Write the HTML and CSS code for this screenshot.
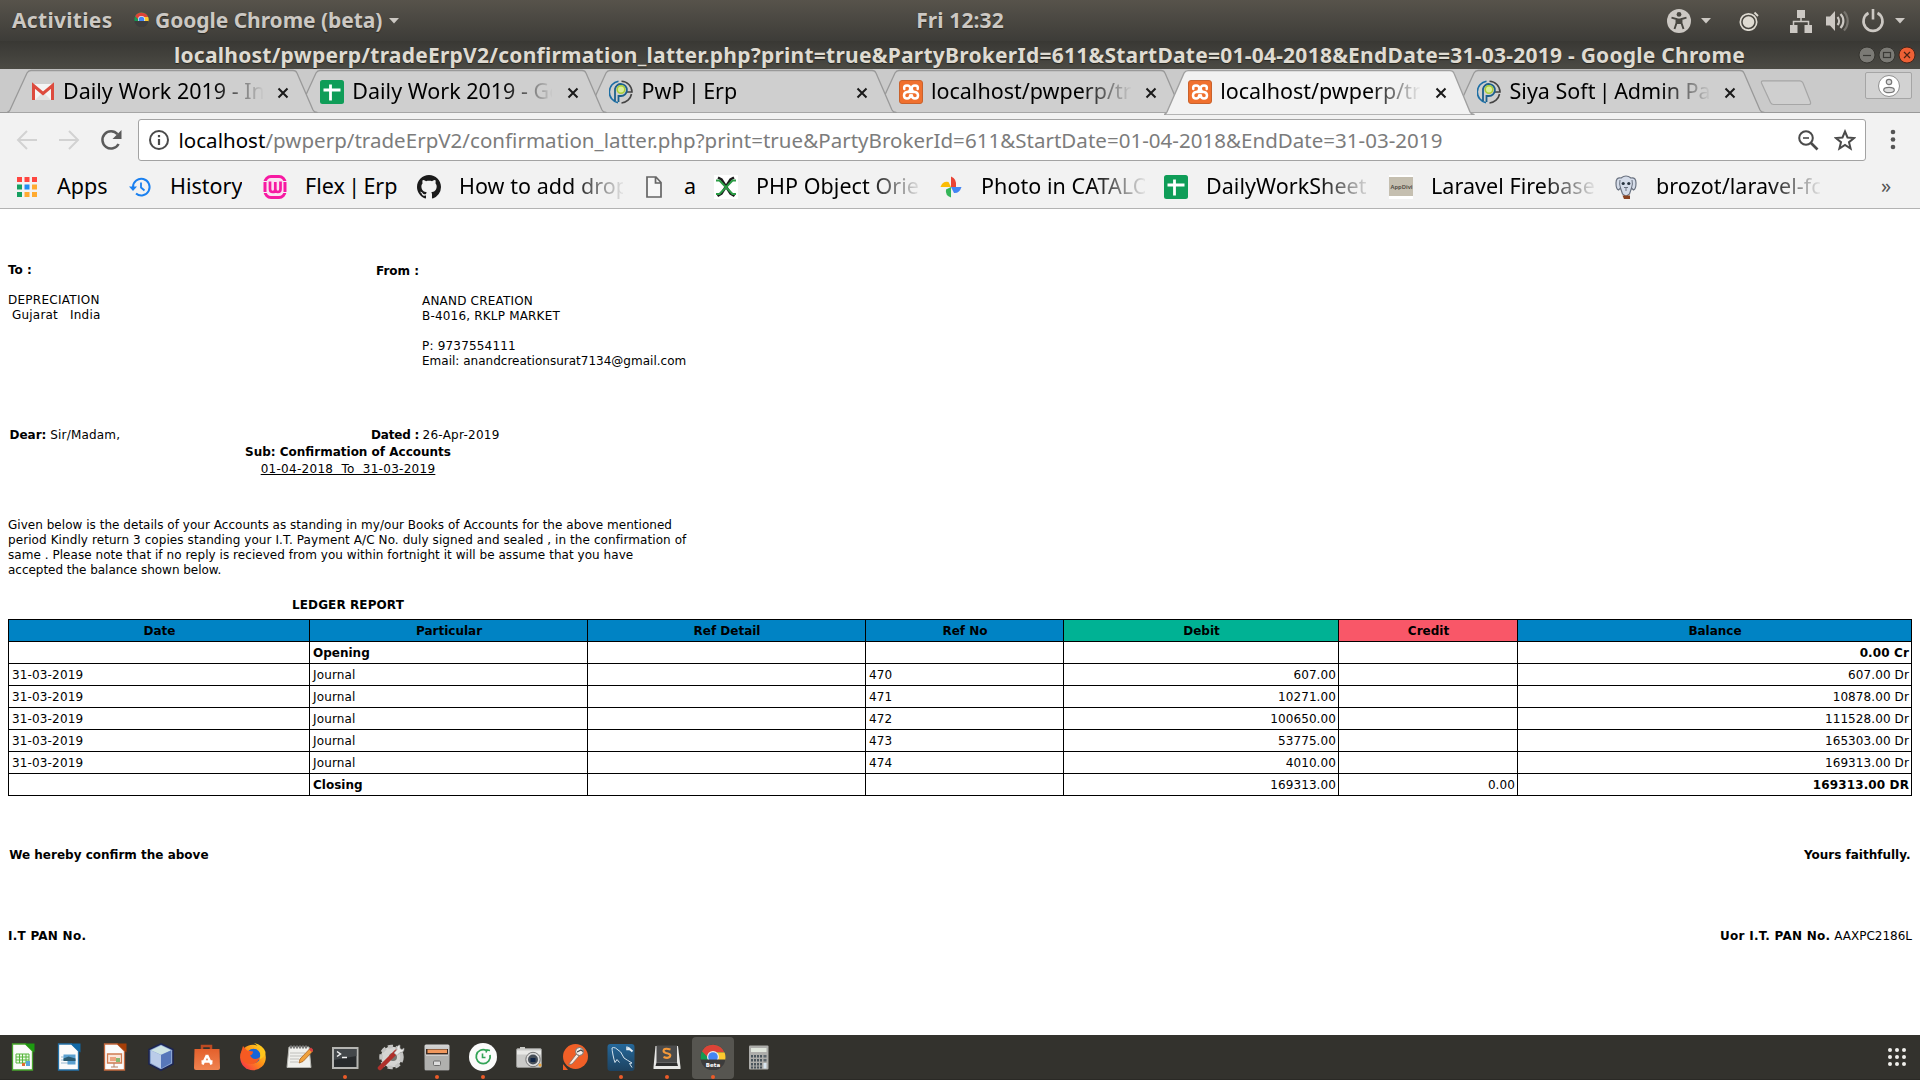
FILE: index.html
```
<!DOCTYPE html>
<html lang="en">
<head>
<meta charset="utf-8">
<title>Confirmation of Accounts</title>
<link rel="stylesheet" href="styles.css">
</head>
<body>
<svg class="defs" aria-hidden="true">
  <defs>
    <linearGradient id="metal" x1="0" y1="0" x2="0" y2="1"><stop offset="0" stop-color="#d6d6d6"/><stop offset="1" stop-color="#929292"/></linearGradient>
    <linearGradient id="cal" x1="0" y1="0" x2="0" y2="1"><stop offset="0" stop-color="#25689a"/><stop offset="1" stop-color="#1d4260"/></linearGradient>
    <linearGradient id="bag" x1="0" y1="0" x2="0" y2="1"><stop offset="0" stop-color="#e4602c"/><stop offset="1" stop-color="#ef8350"/></linearGradient>
    <linearGradient id="fox" x1="1" y1="0" x2="0" y2="1"><stop offset="0" stop-color="#ffe226"/><stop offset=".45" stop-color="#ff9416"/><stop offset="1" stop-color="#f5204f"/></linearGradient>
    <symbol id="tab" viewBox="0 0 311 44" preserveAspectRatio="none"><path d="M0 43.5Q2 43 3 41L20 4Q21.500 1.500 24 1.500H286Q289 1.500 290 4L306 41Q307 43 310 43.500V44H0z"/></symbol>
    <symbol id="sheets" viewBox="0 0 24 24"><rect width="24" height="24" rx="2.500" fill="#0f9d58"/><path d="M10.500 4.500v16M3.500 10h17" stroke="#fff" stroke-width="2.800"/></symbol>
    <symbol id="xampp" viewBox="0 0 24 24"><rect x=".5" y=".5" width="23" height="23" rx="2.500" fill="#f0702e" stroke="#c9622c"/><path d="M5.300 9Q4.500 5.500 8 5.500t3.200 3.200Q11.200 12 8 12q-3 .5-3 3.500t3 3q3.200 0 3.200-3.200M18.700 9q.8-3.500-2.700-3.500t-3.200 3.200Q12.800 12 16 12q3 .5 3 3.500t-3 3q-3.200 0-3.200-3.200M8 12h8" fill="none" stroke="#fff" stroke-width="2.500" stroke-linecap="round"/></symbol>
    <symbol id="pwp" viewBox="0 0 24 24"><path d="M9 22.800A11 11 0 0 1 9.500 1.200" fill="none" stroke="#1c6ea4" stroke-width="1.600"/><path d="M12.500 1.200A11 11 0 0 1 23 12H18M22.500 14A11 11 0 0 1 12.500 23" fill="none" stroke="#444" stroke-width="1.600"/><path d="M6 21V9a6 6 0 1 1 6 7H9.500v6" fill="none" stroke="#1d608c" stroke-width="1.800"/><circle cx="12" cy="9.500" r="3.800" fill="#d8ee9a" stroke="#a9cd3a" stroke-width="1.600"/></symbol>
    <symbol id="chrome" viewBox="0 0 26 26"><circle cx="13" cy="13" r="12.500" fill="#454545"/><path d="M2 7.200A12.500 12.500 0 0 1 24 7.200L24.600 9H13L8 16.500H1.300A12.500 12.500 0 0 1 2 7.200z" fill="#159a52"/><path d="M2 7.200A12.500 12.500 0 0 1 24.500 8.500H13L7.500 13z" fill="#dd4337"/><path d="M17 8.500h7.600a12.500 12.500 0 0 1 .4 8H17z" fill="#fdc92f"/><circle cx="13" cy="13" r="6" fill="#eee"/><circle cx="13" cy="13" r="4.800" fill="#4285f4"/><path d="M.6 15.500h24.800A12.500 12.500 0 0 1 .6 15.500z" fill="#3c3c3c"/></symbol>
    <symbol id="caret" viewBox="0 0 10 6"><path d="M0 0h10L5 5.500z" fill="#ccc8c3"/></symbol>
  </defs>
</svg>

<header class="topbar">
  <div class="topbar-left">
    <span class="activities">Activities</span>
    <svg class="app-icon"><use href="#chrome"/></svg>
    <span class="app-name">Google Chrome (beta)</span>
    <svg class="caret"><use href="#caret"/></svg>
  </div>
  <div class="clock">Fri 12:32</div>
  <div class="tray">
    <svg class="ico24" viewBox="0 0 24 24"><circle cx="12" cy="12" r="12" fill="#ccc8c3"/><circle cx="12" cy="5.400" r="2.400" fill="#484640"/><path d="M4.500 8.700l5 1.300v4l-2 6M19.500 8.700l-5 1.300v4l2 6" fill="none" stroke="#484640" stroke-width="1.900"/><path d="M9 9.500h6v5.500H9z" fill="#484640"/></svg>
    <svg class="caret tray-caret"><use href="#caret"/></svg>
    <svg class="ico20 cam" viewBox="0 0 20 20"><circle cx="9.500" cy="11" r="8.200" fill="none" stroke="#dfdbd2" stroke-width="1.700"/><circle cx="9.500" cy="11" r="5.800" fill="#dfdbd2"/><path d="M15.500 1.500l3.500 3.500" stroke="#dfdbd2" stroke-width="1.800"/></svg>
    <svg class="ico24 net" viewBox="0 0 24 24"><path d="M8 1h8v8H8zM1 16h7.500v8H1zM15.500 16H23v8h-7.500z" fill="#ccc8c3"/><path d="M12 8v4.500M4.500 17v-4.500h15V17" fill="none" stroke="#ccc8c3" stroke-width="1.500"/></svg>
    <svg class="ico24 vol" viewBox="0 0 24 24"><path d="M1 7.500h4l5-5.500v20l-5-5.500H1z" fill="#ccc8c3"/><path d="M12.500 8a6 6 0 0 1 0 8M15.500 5a10 10 0 0 1 0 14" fill="none" stroke="#ccc8c3" stroke-width="2.200"/><path d="M19 2.500a14 14 0 0 1 0 19" fill="none" stroke="#77746e" stroke-width="2.200"/></svg>
    <svg class="ico24 pow" viewBox="0 0 24 24"><path d="M7.500 4a9.500 9.500 0 1 0 9 0M12 0v10.500" fill="none" stroke="#ccc8c3" stroke-width="2.600"/></svg>
    <svg class="caret tray-caret"><use href="#caret"/></svg>
  </div>
</header>

<div class="titlebar">
  <div class="win-title">localhost/pwperp/tradeErpV2/confirmation_latter.php?print=true&amp;PartyBrokerId=611&amp;StartDate=01-04-2018&amp;EndDate=31-03-2019 - Google Chrome</div>
  <div class="win-buttons">
    <svg class="wb" viewBox="0 0 18 18"><circle cx="9" cy="9" r="8" fill="#7b7a75" stroke="#35342f"/><path d="M5 9.500h8" stroke="#3a3935" stroke-width="1.200"/></svg>
    <svg class="wb" viewBox="0 0 18 18"><circle cx="9" cy="9" r="8" fill="#7b7a75" stroke="#35342f"/><rect x="5.500" y="6.500" width="7" height="5" fill="none" stroke="#3a3935" stroke-width="1.200"/></svg>
    <svg class="wb" viewBox="0 0 18 18"><circle cx="9" cy="9" r="8" fill="#ee6035" stroke="#45251a"/><path d="M6 6l6 6M12 6l-6 6" stroke="#4b2314" stroke-width="1.200"/></svg>
  </div>
</div>

<nav class="tabstrip">
  <div class="tab t1"><svg class="tab-bg"><use href="#tab"/></svg>
    <svg class="fav" viewBox="0 0 24 24"><path d="M2 4h20v16H2z" fill="#f4f4f4"/><path d="M4 20l8-8 8 8" fill="#e2e2e2"/><path d="M2.500 20V5.500L12 13.500l9.500-8V20" fill="none" stroke="#dd4b3e" stroke-width="3"/></svg>
    <span class="tab-title">Daily Work 2019 - Inbox</span><svg class="x" viewBox="0 0 12 12"><path d="M1.500 1.500l9 9M10.500 1.500l-9 9"/></svg></div>
  <div class="tab t2"><svg class="tab-bg"><use href="#tab"/></svg><svg class="fav"><use href="#sheets"/></svg><span class="tab-title">Daily Work 2019 - Goo</span><svg class="x" viewBox="0 0 12 12"><path d="M1.500 1.500l9 9M10.500 1.500l-9 9"/></svg></div>
  <div class="tab t3"><svg class="tab-bg"><use href="#tab"/></svg><svg class="fav"><use href="#pwp"/></svg><span class="tab-title bar">PwP | Erp</span><svg class="x" viewBox="0 0 12 12"><path d="M1.500 1.500l9 9M10.500 1.500l-9 9"/></svg></div>
  <div class="tab t4"><svg class="tab-bg"><use href="#tab"/></svg><svg class="fav"><use href="#xampp"/></svg><span class="tab-title">localhost/pwperp/trad</span><svg class="x" viewBox="0 0 12 12"><path d="M1.500 1.500l9 9M10.500 1.500l-9 9"/></svg></div>
  <div class="tab t5 active"><svg class="tab-bg"><use href="#tab"/></svg><svg class="fav"><use href="#xampp"/></svg><span class="tab-title">localhost/pwperp/trad</span><svg class="x" viewBox="0 0 12 12"><path d="M1.500 1.500l9 9M10.500 1.500l-9 9"/></svg></div>
  <div class="tab t6"><svg class="tab-bg"><use href="#tab"/></svg><svg class="fav"><use href="#pwp"/></svg><span class="tab-title">Siya Soft<span class="bar"> | </span>Admin Panel</span><svg class="x" viewBox="0 0 12 12"><path d="M1.500 1.500l9 9M10.500 1.500l-9 9"/></svg></div>
  <svg class="newtab" viewBox="0 0 52 26"><path d="M3 .8H40Q42 .8 43 3L50.500 22Q51 24.500 49 24.500H13.500Q11.500 24.500 10.500 22.500L1.500 3Q1 .8 3 .8z" fill="#cfcfcf" stroke="#a6a6a6" stroke-width="1.200"/></svg>
  <div class="profile"><svg class="avatar" viewBox="0 0 22 22"><circle cx="11" cy="11" r="10.500" fill="#fff" stroke="#8f8f8f"/><circle cx="11" cy="7" r="2.700" fill="#ddd" stroke="#777" stroke-width="1.200"/><ellipse cx="11" cy="15" rx="5.300" ry="2.700" fill="#ddd" stroke="#777" stroke-width="1.200"/></svg></div>
</nav>

<div class="toolbar">
  <svg class="nav-ico" viewBox="0 0 22 22"><path d="M21 11H2.500M11 2L2 11l9 9" fill="none" stroke="#d2d2d2" stroke-width="2"/></svg>
  <svg class="nav-ico" viewBox="0 0 22 22"><path d="M1 11h18.500M11 2l9 9-9 9" fill="none" stroke="#d2d2d2" stroke-width="2"/></svg>
  <svg class="nav-ico" viewBox="0 0 22 22"><path d="M18.600 15A8.600 8.600 0 1 1 17.500 5.200" fill="none" stroke="#5a5a5a" stroke-width="2.500"/><path d="M21.500 1v9h-9z" fill="#5a5a5a"/></svg>
  <div class="omnibox">
    <svg class="info" viewBox="0 0 22 22"><circle cx="11" cy="11" r="9" fill="none" stroke="#4a4a4a" stroke-width="2"/><path d="M11 10v6M11 6v2.200" stroke="#4a4a4a" stroke-width="2.200"/></svg>
    <div class="url"><span class="host">localhost</span>/pwperp/tradeErpV2/confirmation_latter.php?print=true&amp;PartyBrokerId=611&amp;StartDate=01-04-2018&amp;EndDate=31-03-2019</div>
    <svg class="nav-ico zoomout" viewBox="0 0 22 22"><circle cx="9" cy="9" r="6.800" fill="none" stroke="#4a4a4a" stroke-width="2"/><path d="M14 14l6.500 6.500" stroke="#4a4a4a" stroke-width="2.600"/><path d="M6 9h6" stroke="#4a4a4a" stroke-width="1.600"/></svg>
    <svg class="nav-ico star" viewBox="0 0 22 22"><path d="M11 2.500l2.500 6 6.500.500-5 4.200 1.600 6.300L11 16l-5.600 3.500L7 13.200 2 9l6.500-.5z" fill="none" stroke="#4a4a4a" stroke-width="2"/></svg>
  </div>
  <svg class="menu" viewBox="0 0 6 22"><circle cx="3" cy="3" r="2.300"/><circle cx="3" cy="10.500" r="2.300"/><circle cx="3" cy="18" r="2.300"/></svg>
</div>

<div class="bookmarks">
  <div class="bm apps"><svg class="bi" viewBox="0 0 24 24"><path d="M2 2h5v5H2zM9.500 2h5v5h-5zM17 2h5v5h-5z" fill="#ff4640"/><path d="M2 9.500h5v5H2zM2 17h5v5H2z" fill="#16a061"/><path d="M9.500 9.500h5v5h-5z" fill="#1e8df0"/><path d="M17 9.500h5v5h-5zM9.500 17h5v5h-5zM17 17h5v5h-5z" fill="#ffaa30"/></svg><span>Apps</span></div>
  <div class="bm hist"><svg class="bi" viewBox="0 0 24 24"><path d="M5 12a8.300 8.300 0 1 1 3 6.500" fill="none" stroke="#1a80f0" stroke-width="2"/><path d="M1 11.500h8L5 16z" fill="#1a80f0"/><path d="M13 7.500v5l3.500 3" fill="none" stroke="#1a80f0" stroke-width="1.800"/></svg><span>History</span></div>
  <div class="bm flex"><svg class="bi" viewBox="0 0 24 24"><rect x="2" y="1.500" width="20" height="21" rx="6" fill="#fbe3f2" stroke="#f719a2" stroke-width="3"/><path d="M7 6.500v7.500q0 3 2.700 3t2.600-3V7v7q0 3 2.600 3t2.600-3V6.500" fill="none" stroke="#f719a2" stroke-width="2.700"/><path d="M0 6.500h4M0 17.500h4M20 6.500h4M20 17.500h4" stroke="#f2f2f2" stroke-width="1.200"/></svg><span class="bar">Flex | Erp</span></div>
  <div class="bm wide"><svg class="bi" viewBox="0 0 16 16"><path fill="#1b1b1b" d="M8 0C3.580 0 0 3.580 0 8c0 3.540 2.290 6.530 5.470 7.590.4.070.55-.17.55-.38 0-.19-.01-.82-.01-1.490-2.010.37-2.530-.49-2.690-.94-.09-.23-.48-.94-.82-1.130-.28-.15-.68-.52-.01-.53.63-.01 1.080.58 1.230.82.72 1.210 1.870.87 2.330.66.070-.52.28-.87.510-1.070-1.780-.2-3.640-.89-3.640-3.950 0-.87.310-1.590.820-2.150-.08-.2-.36-1.020.080-2.120 0 0 .67-.21 2.200.820.640-.18 1.320-.27 2-.27s1.360.090 2 .270c1.530-1.040 2.200-.82 2.200-.82.440 1.100.160 1.920.080 2.120.510.560.820 1.270.820 2.150 0 3.070-1.870 3.750-3.650 3.950.290.250.540.730.540 1.480 0 1.070-.01 1.930-.01 2.200 0 .210.150.460.550.380A8.010 8.010 0 0 0 16 8c0-4.420-3.580-8-8-8z"/></svg><span>How to add drop</span></div>
  <div class="bm file"><svg class="bi" viewBox="0 0 24 24"><path d="M5 2h9l5 5.500V22H5zM13.500 2v6H19" fill="#f7f7f7" stroke="#666" stroke-width="1.700"/></svg><span>a</span></div>
  <div class="bm wide"><svg class="bi" viewBox="0 0 24 24"><path d="M0 0h24v24H0z" fill="#fff"/><path d="M4 2.500l3.500 2 9 14 4 2.500M20 2.500l-3.500 2-9 14-4 2.500" fill="none" stroke="#1c1c1c" stroke-width="2.500"/><path d="M2 5.500h3.500L18.500 19H22M22 5.500h-3.500L5.500 19H2" fill="none" stroke="#2c9c46" stroke-width="2"/></svg><span>PHP Object Oriented</span></div>
  <div class="bm wide"><svg class="bi" viewBox="0 0 24 24"><path d="M12 12V1.500q6 2 5 10.500z" fill="#e94335"/><path d="M12 12h10.500q-2 6.500-7.500 6z" fill="#4285f4"/><path d="M12 12v10.500q-6-2-5-8z" fill="#35b558"/><path d="M12 12H1.500q2-6 8-5z" fill="#fbbc05"/></svg><span>Photo in CATALOG</span></div>
  <div class="bm wide"><svg class="bi"><use href="#sheets"/></svg><span>DailyWorkSheet -</span></div>
  <div class="bm wide"><svg class="bi" viewBox="0 0 24 24"><path d="M0 0h24v24H0z" fill="#fff"/><path d="M0 2h24v19H0z" fill="#c5bfb0"/><text x="1.500" y="14" class="tiny" textLength="22" lengthAdjust="spacingAndGlyphs">AppDivi</text></svg><span>Laravel Firebase -</span></div>
  <div class="bm wide"><svg class="bi" viewBox="0 0 24 24"><path d="M7 3Q2 2 2 8t2.500 7l2-2 2 6 3.500 2.500 3.500-2.500 2-6 2 2Q22 14 22 8t-5-5q-5-4-10 0z" fill="#d5dce9" stroke="#6a7280" stroke-width="1.200"/><path d="M6 5q-1 4 .5 8M18 5q1 4-.5 8M10 12.500h4M12 13v3" fill="none" stroke="#6a7280"/><circle cx="9.200" cy="8.500" r="1.600" fill="#26323e"/><circle cx="14.800" cy="8.500" r="1.600" fill="#26323e"/><path d="M8.500 20.500h7.500V24h-6z" fill="#8a4220"/></svg><span>brozot/laravel-fcm</span></div>
  <span class="more">»</span>
</div>

<main class="page">
  <section class="letter">
    <div class="parties">
      <div class="to">
        <b>To :</b>
        <p class="t-up">DEPRECIATION</p>
        <p class="t-ad">&nbsp;Gujarat &nbsp; India</p>
      </div>
      <div class="from">
        <b>From :</b>
        <div class="from-body">
          <p>ANAND CREATION</p>
          <p>B-4016, RKLP MARKET</p>
          <p>&nbsp;</p>
          <p>P: 9737554111</p>
          <p class="mail">Email: anandcreationsurat7134@gmail.com</p>
        </div>
      </div>
    </div>
    <div class="salute">
      <div><b class="dear">Dear:</b> <span class="sir">Sir/Madam,</span></div>
      <b class="dated">Dated :</b>
      <span class="date">26-Apr-2019</span>
    </div>
    <div class="subject"><b>Sub: Confirmation of Accounts</b></div>
    <div class="period"><u>01-04-2018&nbsp; To&nbsp; 31-03-2019</u></div>
    <p class="body-text"><span class="l1">Given below is the details of your Accounts as standing in my/our Books of Accounts for the above mentioned</span><br><span class="l2">period Kindly return 3 copies standing your I.T. Payment A/C No. duly signed and sealed , in the confirmation of</span><br><span class="l3">same . Please note that if no reply is recieved from you within fortnight it will be assume that you have</span><br><span class="l4">accepted the balance shown below.</span></p>
    <div class="report-title"><b>LEDGER REPORT</b></div>
  </section>

  <table class="ledger">
    <colgroup><col class="c1"><col class="c2"><col class="c3"><col class="c4"><col class="c5"><col class="c6"><col class="c7"></colgroup>
    <thead><tr><th>Date</th><th>Particular</th><th>Ref Detail</th><th>Ref No</th><th class="debit">Debit</th><th class="credit">Credit</th><th>Balance</th></tr></thead>
    <tbody>
      <tr><td></td><td><b>Opening</b></td><td></td><td></td><td></td><td></td><td class="n"><b>0.00 Cr</b></td></tr>
      <tr><td>31-03-2019</td><td>Journal</td><td></td><td>470</td><td class="n">607.00</td><td></td><td class="n">607.00 Dr</td></tr>
      <tr><td>31-03-2019</td><td>Journal</td><td></td><td>471</td><td class="n">10271.00</td><td></td><td class="n">10878.00 Dr</td></tr>
      <tr><td>31-03-2019</td><td>Journal</td><td></td><td>472</td><td class="n">100650.00</td><td></td><td class="n">111528.00 Dr</td></tr>
      <tr><td>31-03-2019</td><td>Journal</td><td></td><td>473</td><td class="n">53775.00</td><td></td><td class="n">165303.00 Dr</td></tr>
      <tr><td>31-03-2019</td><td>Journal</td><td></td><td>474</td><td class="n">4010.00</td><td></td><td class="n">169313.00 Dr</td></tr>
      <tr><td></td><td><b>Closing</b></td><td></td><td></td><td class="n">169313.00</td><td class="n">0.00</td><td class="n"><b>169313.00 DR</b></td></tr>
    </tbody>
  </table>

  <div class="sign"><b>We hereby confirm the above</b><b>Yours faithfully.</b></div>
  <div class="pan"><b>I.T PAN No.</b><div><b>Uor I.T. PAN No.</b> AAXPC2186L</div></div>
</main>

<footer class="dock">
  <div class="app"><svg viewBox="0 0 28 28"><path d="M3.500 1h13l7 7v19h-20z" fill="#fbfbfb" stroke="#47a52c" stroke-width="1.300"/><path d="M15.500.5h10v9z" fill="#1d9a10"/><path d="M7 11h13v9H7z" fill="#eefae8" stroke="#56b53c"/><path d="M7 14h13M7 17h13M10.500 11v9M13.500 11v9M17 11v9" stroke="#56b53c"/><path d="M13 20h3v3h-3z" fill="#e56b2f"/><path d="M17 18h4v5h-4z" fill="#5aa3d6"/></svg></div>
  <div class="app"><svg viewBox="0 0 28 28"><path d="M3.500 1h13l7 7v19h-20z" fill="#fbfbfb" stroke="#2472a8" stroke-width="1.300"/><path d="M15.500.5h10v9z" fill="#1168a6"/><path d="M6 14h5M6 17h5M6 20h8" stroke="#b9cfe0" stroke-width="1.500"/><path d="M8.500 11.500h12v10h-8v-4h-4z" fill="#5aa0d0"/><path d="M8.500 15.500l5-2 7 2v2.500h-12z" fill="#2b5a71"/></svg></div>
  <div class="app"><svg viewBox="0 0 28 28"><path d="M3.500 1h13l7 7v19h-20z" fill="#fbfbfb" stroke="#c4693e" stroke-width="1.300"/><path d="M15.500.5h10v9z" fill="#a63e07"/><path d="M6.500 11h14v9h-14z" fill="#fbe5d8" stroke="#d07b50" stroke-width="1.300"/><path d="M9 14h6v4H9z" fill="#eba581"/><path d="M13 20v4M10 24h7" stroke="#b98063"/><path d="M15 15h4v4h-4z" fill="#88b870"/></svg></div>
  <div class="app"><svg viewBox="0 0 28 28"><path d="M14 .8l12 5.700V21L14 27.300 2 21V6.500z" fill="#8aa5d2" stroke="#1c2551" stroke-width="1.600"/><path d="M14 2.500l10 4.700-10 4.600L4 7.200z" fill="#cfe4e4"/><path d="M14 12l10-4.600V20l-10 5.500z" fill="#5777b9"/><path d="M14 12L4 7.400V20l10 5.500z" fill="#bacce9"/></svg></div>
  <div class="app"><svg viewBox="0 0 28 28"><path d="M9 8V3h9v5" fill="none" stroke="#bd4a22" stroke-width="2.500"/><path d="M1.500 6h25l.5 19q0 2-2 2H3q-2 0-2-2z" fill="url(#bag)"/><path d="M14 12l-4.500 9.500M14 12l4.500 9.500M8.500 18.500h11" fill="none" stroke="#fff" stroke-width="2.500"/></svg></div>
  <div class="app"><svg viewBox="0 0 28 28"><circle cx="14" cy="14.500" r="12.800" fill="url(#fox)"/><circle cx="14.500" cy="13" r="7.200" fill="#1565d8"/><path d="M1.500 11L4 3l4 4.500 6 1q0 3-3 4l2 2.500q4 2.500 8-1-2 7-9 7T1.500 15z" fill="#f55a22"/><path d="M15 0q5 3 6 8t-1 9q7-4 6.500-8Q24 2 15 0z" fill="#ffc61c"/></svg></div>
  <div class="app"><svg viewBox="0 0 28 28"><path d="M4 4h20l2 20.500H2z" fill="#f0f0ec" stroke="#b7b7b2"/><path d="M5 4h17" stroke="#777" stroke-width="3" stroke-dasharray="2 1"/><path d="M5 10h15M5 13h13M5 16h9M5 19h8" stroke="#c0c0bc" stroke-width="1.200"/><path d="M14 20l1-4L25 5.500l3 2.500-10 10.500z" fill="#efa03a" stroke="#a56324" stroke-width=".8"/><path d="M24 6.500l2-2 2.500 2.500-2 2z" fill="#d84040"/></svg></div>
  <div class="app run"><svg viewBox="0 0 28 28"><path d="M2 5h24.500v20H2z" fill="#272a2c" stroke="#b5b5b2" stroke-width="2"/><path d="M3 6h22.500v7L3 17z" fill="#43474a"/><path d="M6 8.500l3.500 2.500L6 13.500M11 14.500h5" fill="none" stroke="#f3f3f3" stroke-width="1.500"/></svg></div>
  <div class="app"><svg viewBox="0 0 28 28"><circle cx="14.500" cy="14" r="10.500" fill="#d5d5d3" stroke="#c4c4c2" stroke-width="3.500" stroke-dasharray="5 2.600"/><circle cx="16" cy="14" r="4" fill="#75756f"/><path d="M3 25L19 9" stroke="#b0302b" stroke-width="4.500" stroke-linecap="round"/><path d="M17 10l3-3.500q-1-4 3-4.500v3.500l2 1 2-1.500q.5 4.500-4 4.500l-3 3z" fill="#e8e8e6" stroke="#999" stroke-width=".6"/></svg></div>
  <div class="app run"><svg viewBox="0 0 28 28"><rect x="1.500" y="1.500" width="25" height="26" rx="1.500" fill="url(#metal)"/><path d="M3 6h22v6H3z" fill="#3e2d24"/><path d="M4.500 6.500h19.500V10h-19.500z" fill="#f1985d"/><path d="M2 12h24v15H2z" fill="#b0b0ae"/><path d="M3 12h22" stroke="#eee"/><rect x="10.500" y="18" width="7" height="4.500" rx="1" fill="#ddd" stroke="#6d6d6d"/></svg></div>
  <div class="app run"><svg viewBox="0 0 28 28"><circle cx="14" cy="14" r="14" fill="#fbfbfb"/><path d="M17.500 7.500A7 7 0 1 0 21 12" fill="none" stroke="#33a457" stroke-width="1.800"/><path d="M17 9.500l1-2.500 3 .500M13.500 10.500v4h3" fill="none" stroke="#33a457" stroke-width="1.600"/></svg></div>
  <div class="app"><svg viewBox="0 0 28 28"><rect x="1.500" y="5.500" width="25" height="19" rx="1.500" fill="#cacac8" stroke="#92928f"/><path d="M2 7.500h24v4H2z" fill="#e8e8e6"/><path d="M5 4h5v2H5z" fill="#c9c9c5"/><circle cx="18" cy="16.500" r="7.200" fill="#ddd" stroke="#777"/><circle cx="18" cy="16.500" r="5" fill="#474f58"/><path d="M15.500 15h5v4h-5z" fill="#102445"/><circle cx="25" cy="22" r="1.500" fill="#efa53a"/></svg></div>
  <div class="app"><svg viewBox="0 0 28 28"><circle cx="14.500" cy="13.500" r="12.500" fill="#f05f27"/><path d="M2 21v6h5z" fill="#f05f27"/><path d="M7.500 21.500l8-10.500 2.500 2-7 8z" fill="#fbe8dd" stroke="#77706a" stroke-width=".8"/><circle cx="18.500" cy="8.500" r="4" fill="#f3eeea" stroke="#77706a"/><path d="M16 9l4-2 2 1.500" fill="none" stroke="#444" stroke-width="1.200"/></svg></div>
  <div class="app run"><svg viewBox="0 0 28 28"><rect x=".5" y="1" width="27" height="27" rx="3" fill="url(#cal)"/><path d="M8 19.500Q7 17 6 12T5 5q1-1 3.500 0 6 3 8.500 10 3 2 8 5l-2.500.5 2.500 4M8 19.500l2-3 2.500 3" fill="none" stroke="#d5e3ed" stroke-width="1"/><path d="M21 4.500l4.500 4" stroke="#e6eef4" stroke-width="2"/><path d="M20 3.500v3h3" fill="none" stroke="#e6eef4" stroke-width="1.500"/></svg></div>
  <div class="app run"><svg viewBox="0 0 28 28"><path d="M2.500 3h22.500l2.500 21v2H.5v-2z" fill="#e8e8e6"/><path d="M3.500 2.500h20.500v17h-20.500z" fill="#4b4b4b"/><path d="M3.500 19.500h20.500l1 3.500H2.500z" fill="#2d2d2d"/><path d="M17.500 6.500q-5-1.500-6.500 0-1.500 2.500 2 3.500 5.500 1 4 3.500-2 2.500-6.500.5" fill="none" stroke="#f4993a" stroke-width="2.200"/></svg></div>
  <div class="app run current"><svg viewBox="0 0 28 28"><use href="#chrome" x="1" y="1" width="26" height="26"/><text x="14" y="23.500" text-anchor="middle" class="beta">Beta</text></svg></div>
  <div class="app"><svg viewBox="0 0 28 28"><rect x="4" y="2.500" width="19.500" height="24" rx="1" fill="#adadaa"/><path d="M6 5h15.500v4H6z" fill="#dfe5db"/><path d="M6 12h11v2.500H6zM6 16h11v2.500H6zM6 20h11v2.500H6zM6 23.500h11v2H6z" fill="#4a555c"/><path d="M8.500 11v15M11.500 11v15M14.500 11v15" stroke="#adadaa"/><path d="M18.500 12h3v2.500h-3zM18.500 16h3v2.500h-3z" fill="#5d676d"/><path d="M18.500 20h3v5.500h-3z" fill="#d8e5ef"/></svg></div>
  <svg class="grid" viewBox="0 0 20 20"><g fill="#f0efeb"><circle cx="3" cy="3" r="2"/><circle cx="10" cy="3" r="2"/><circle cx="17" cy="3" r="2"/><circle cx="3" cy="10" r="2"/><circle cx="10" cy="10" r="2"/><circle cx="17" cy="10" r="2"/><circle cx="3" cy="17" r="2"/><circle cx="10" cy="17" r="2"/><circle cx="17" cy="17" r="2"/></g></svg>
</footer>
</body>
</html>
```
FILE: styles.css
```
* { box-sizing: border-box; }
body {
  margin: 0;
  width: 1920px;
  height: 1080px;
  overflow: hidden;
  display: flex;
  flex-direction: column;
  background: #fff;
  font: 21.5px "Noto Sans", sans-serif;
  color: #000;
  white-space: nowrap;
}
svg { display: block; flex: none; }
p { margin: 0; }
.defs { position: absolute; width: 0; height: 0; }

/* desktop top bar */
.topbar {
  height: 41px;
  flex: none;
  display: grid;
  grid-template-columns: 1fr auto 1fr;
  align-items: center;
  background: linear-gradient(#57534b, #3d3c38);
  color: #ccc8c3;
  font-weight: 700;
  font-size: 21px;
  line-height: 39px;
  text-shadow: 0 1px 1px #26251f;
}
.topbar-left { display: flex; align-items: center; padding-left: 12px; }
.activities { width: 122px; letter-spacing: .3px; padding-bottom: 1px; }
.app-icon { width: 15px; height: 15px; margin: 0 6px 2px 0; }
.app-name { width: 230px; letter-spacing: -.05px; padding-bottom: 1px; }
.caret { width: 10px; height: 6px; margin-left: 4px; }
.clock { letter-spacing: .1px; padding-bottom: 1px; }
.tray { display: flex; align-items: center; justify-content: flex-end; padding-right: 15px; }
.ico24 { width: 24px; height: 24px; }
.ico20 { width: 20px; height: 20px; }
.tray-caret { margin-left: 10px; }
.cam { margin-left: 28px; }
.net { margin-left: 30px; }
.vol, .pow { margin-left: 12px; }

/* window title bar */
.titlebar {
  height: 28px;
  flex: none;
  display: flex;
  align-items: center;
  background: linear-gradient(#393834, #4b4a44);
  color: #dfdbd2;
  font-weight: 700;
  font-size: 21px;
  line-height: 28px;
  text-shadow: 0 1px 1px #26251f;
}
.win-title { padding-left: 174px; flex: 1; letter-spacing: .24px; }
.win-buttons { display: flex; gap: 2px; padding-right: 4px; }
.wb { width: 18px; height: 18px; }

/* tabs */
.tabstrip {
  height: 44px;
  flex: none;
  display: flex;
  padding-left: 7px;
  background: #cacaca;
  position: relative;
  border-bottom: 1px solid #999;
}
.tab {
  position: relative;
  width: 311px;
  height: 44px;
  margin-right: -21.7px;
  display: flex;
  align-items: center;
  padding-left: 23.800px;
  flex: none;
}
.t1 { z-index: 6; } .t2 { z-index: 5; } .t3 { z-index: 4; } .t4 { z-index: 3; }
.t5 { z-index: 7; } .t6 { z-index: 1; }
.tab-bg { position: absolute; left: 0; top: 0; width: 311px; height: 44px; z-index: -1; fill: #cfcfcf; stroke: #999; stroke-width: 1.300; }
.active .tab-bg { fill: #f2f2f2; stroke: #a0a0a0; height: 46px; }
.fav { width: 24px; height: 24px; margin-top: 1px; }
.tab-title {
  width: 200px;
  margin-left: 8.200px;
  overflow: hidden;
  line-height: 44px;
  -webkit-mask-image: linear-gradient(90deg, #000 150px, transparent 201px);
  mask-image: linear-gradient(90deg, #000 150px, transparent 201px);
}
.bar { word-spacing: -2.200px; }
.x { width: 12px; height: 12px; margin: 3px 0 0 14.500px; stroke: #1a1a1a; stroke-width: 2; }
.newtab { width: 52px; height: 26px; margin: 11px 0 0 17px; }
.profile {
  width: 47px;
  height: 27px;
  margin: 3px 8px 0 auto;
  border: 1.500px solid #a5a5a5;
  border-radius: 2px;
  background: #d2d2d2;
  display: flex;
  align-items: center;
  justify-content: center;
}
.avatar { width: 22px; height: 22px; }

/* toolbar */
.toolbar {
  height: 54px;
  flex: none;
  display: flex;
  align-items: center;
  padding-left: 16px;
  background: #f2f2f2;
}
.nav-ico { width: 22px; height: 22px; margin-right: 20px; }
.omnibox {
  width: 1728px;
  height: 42px;
  margin-left: -4px;
  border: 1px solid #a3a3a3;
  border-radius: 3px;
  background: #fff;
  display: flex;
  align-items: center;
  padding-left: 9px;
}
.info { width: 22px; height: 22px; }
.url { flex: 1; margin-left: 8.500px; font-size: 20.500px; letter-spacing: .03px; line-height: 38px; color: #7c7c7c; padding-bottom: 1px; }
.host { color: #000; }
.zoomout { margin-right: 15px; }
.star { margin-right: 9px; }
.menu { width: 6px; height: 22px; margin-left: 24px; fill: #555; }

/* bookmarks bar */
.bookmarks {
  height: 42px;
  flex: none;
  display: flex;
  align-items: center;
  padding: 0 0 1px 15px;
  background: #f2f2f2;
  border-bottom: 1px solid #b3b3b3;
}
.bm { display: flex; align-items: center; flex: none; }
.bm span { margin-left: 18px; line-height: 36px; padding-bottom: 2px; overflow: hidden; }
.bi { width: 24px; height: 24px; }
.apps { width: 113px; }
.hist { width: 135px; }
.flex { width: 154px; }
.file { width: 72px; }
.wide { width: 225px; }
.wide span {
  width: 164px;
  letter-spacing: .05px;
  -webkit-mask-image: linear-gradient(90deg, #000 111px, transparent 167px);
  mask-image: linear-gradient(90deg, #000 111px, transparent 167px);
}
.tiny { font: 600 6px "Noto Sans", sans-serif; fill: #4c4840; }
.more { margin-left: 42px; color: #555; font-size: 20px; line-height: 30px; padding-bottom: 2px; }

/* document */
.page {
  flex: 1;
  padding: 54px 8px 0;
  font: 12px/15px "DejaVu Sans", sans-serif;
}
.letter { width: 680px; }
.parties { display: grid; grid-template-columns: 368px 1fr; height: 165px; }
.t-up { margin-top: 15px; letter-spacing: .27px; }
.t-ad { letter-spacing: .2px; }
.from { padding-top: 1px; }
.from-body { margin: 15px 0 0 46px; letter-spacing: .19px; }
.mail { letter-spacing: .01px; }
.salute { display: grid; grid-template-columns: 361px 50px 1fr; padding-left: 1px; height: 17px; margin-left: 1px; }
.salute > div { margin-left: -.5px; }
.sir { letter-spacing: .18px; }
.dated { letter-spacing: -.2px; }
.date { margin-left: 1.500px; letter-spacing: .27px; }
.subject { text-align: center; height: 17px; }
.period { text-align: center; height: 56px; letter-spacing: .28px; }
.period u { text-underline-offset: 1px; }
.l1 { letter-spacing: .03px; }
.l2 { letter-spacing: .085px; }
.l3 { letter-spacing: .045px; }
.l4 { letter-spacing: -.03px; }
.report-title { text-align: center; margin: 20px 0 6px; letter-spacing: .1px; }

.ledger {
  width: 1904px;
  table-layout: fixed;
  border-collapse: separate;
  border-spacing: 0;
  border: 1px solid #000;
  border-width: 1px 0 0 1px;
  letter-spacing: .15px;
}
.ledger th, .ledger td {
  height: 22px;
  padding: 1px 2px 0 3px;
  border: 1px solid #000;
  border-width: 0 1px 1px 0;
  text-align: left;
}
.ledger th { background: #0083c4; text-align: center; letter-spacing: 0; }
.ledger th.debit { background: #00b294; }
.ledger th.credit { background: #f95768; }
.ledger td.n { text-align: right; letter-spacing: .1px; }
.ledger b { letter-spacing: 0; }
.ledger .n b { letter-spacing: .12px; }
.c1 { width: 301px; } .c2, .c3 { width: 278px; } .c4 { width: 198px; }
.c5 { width: 275px; } .c6 { width: 179px; } .c7 { width: 394px; }

.sign, .pan { display: flex; justify-content: space-between; }
.sign { margin-top: 52px; padding: 0 1.500px 0 1.200px; }
.pan { margin-top: 66px; }
.pan b { letter-spacing: .25px; }

/* dock */
.dock {
  height: 45px;
  flex: none;
  display: flex;
  align-items: center;
  background: #33322d;
  border-bottom: 1px solid #2a2925;
}
.app { width: 46px; height: 44px; position: relative; display: flex; justify-content: center; padding-top: 8px; }
.app svg { width: 28px; height: 28px; position: relative; }
.run::after {
  content: "";
  position: absolute;
  left: 21px;
  bottom: 0;
  width: 4px;
  height: 4px;
  border-radius: 50%;
  background: #ec5b29;
}
.current::before {
  content: "";
  position: absolute;
  left: 2px;
  top: 2px;
  width: 42px;
  height: 42px;
  border-radius: 4px;
  background: #565550;
}
.beta { font: bold 5.500px "DejaVu Sans", sans-serif; fill: #fff; }
.grid { width: 20px; height: 20px; margin-left: auto; margin-right: 13px; }
```
